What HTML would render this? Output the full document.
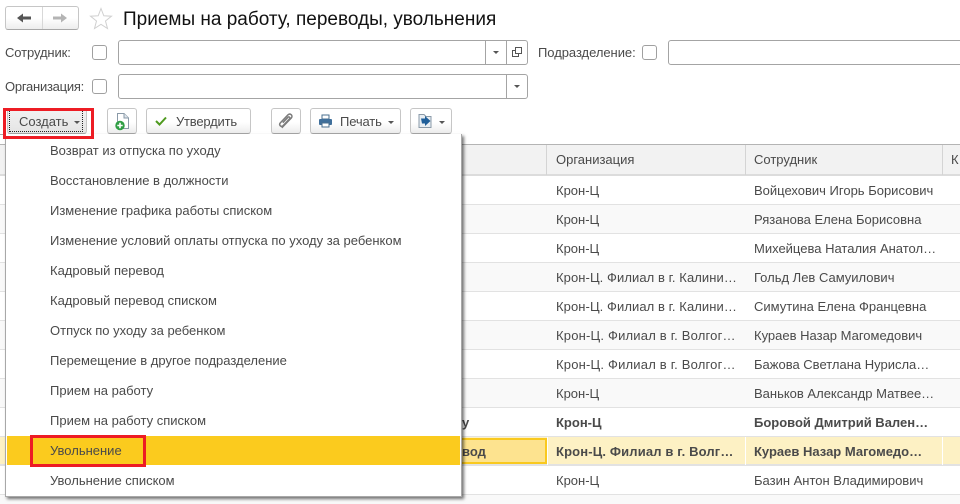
<!DOCTYPE html>
<html lang="ru"><head><meta charset="utf-8"><title>Приемы на работу</title>
<style>
html,body{margin:0;padding:0;width:960px;height:504px;overflow:hidden;background:#fff}
body{font-family:"Liberation Sans",Arial,sans-serif;font-size:13px;color:#4a4a4a;position:relative}
.a{position:absolute;box-sizing:border-box}
.t{position:absolute;white-space:nowrap;line-height:16px;height:16px}
.btn{position:absolute;box-sizing:border-box;top:108px;height:26px;border:1px solid #c6c6c6;border-bottom-color:#a8a8a8;border-radius:3px;background:linear-gradient(#fff 0,#fff 55%,#ececec 100%)}
.cb{position:absolute;box-sizing:border-box;width:15px;height:15px;border:1px solid #a0a0a0;border-radius:3px;background:#fff}
.inp{position:absolute;box-sizing:border-box;height:25px;border:1px solid #a4a4a4;border-radius:3px;background:#fff}
.tri{position:absolute;width:0;height:0;border-left:3px solid transparent;border-right:3px solid transparent;border-top:3px solid #555}
.row{position:absolute;left:0;width:960px;height:29px;box-sizing:border-box;border-bottom:1px solid #e2e2e2}
.alt{background:#f9f9f9}
.c1,.c2,.c3{position:absolute;top:7px;white-space:nowrap;line-height:16px;color:#4a4a4a}
.c1{left:556px}.c2{left:754px}.c3{left:400px}
.b{font-weight:bold}
.m{position:absolute;left:50px;white-space:nowrap;line-height:16px;color:#4a4a4a}
.red{position:absolute;box-sizing:border-box;border:3px solid #ed1c24}
</style></head><body>

<!-- nav -->
<div class="a" style="left:5px;top:6px;width:74px;height:24px;border:1px solid #c6c6c6;border-bottom-color:#a8a8a8;border-radius:3px;background:linear-gradient(#fff 50%,#ededed)"></div>
<div class="a" style="left:42px;top:7px;width:1px;height:22px;background:#d8d8d8"></div>
<svg class="a" style="left:16px;top:12px" width="18" height="12" viewBox="0 0 18 12"><path d="M1 6L7 1.500V4.500H15V7.500H7V10.500Z" fill="#555"/></svg>
<svg class="a" style="left:52px;top:12px" width="18" height="12" viewBox="0 0 18 12"><path d="M15 6L9 1.500V4.500H1V7.500H9V10.500Z" fill="#b4b4b4"/></svg>
<svg class="a" style="left:89px;top:7px" width="24" height="23" viewBox="0 0 24 23"><path d="M12 1.500L14.800 8.800L22.500 9.200L16.500 14L18.500 21.500L12 17.300L5.500 21.500L7.500 14L1.500 9.200L9.200 8.800Z" fill="#fff" stroke="#d0d0d0" stroke-width="1"/></svg>
<div class="t" style="left:123px;top:9px;font-size:19px;line-height:21px;height:21px;color:#111">Приемы на работу, переводы, увольнения</div>

<!-- filters -->
<div class="t" style="left:5px;top:45px;letter-spacing:-.1px">Сотрудник:</div>
<div class="cb" style="left:92px;top:45px"></div>
<div class="inp" style="left:118px;top:40px;width:410px"></div>
<div class="a" style="left:485px;top:41px;width:1px;height:23px;background:#a4a4a4"></div>
<div class="a" style="left:506px;top:41px;width:1px;height:23px;background:#a4a4a4"></div>
<div class="tri" style="left:493px;top:51px"></div>
<svg class="a" style="left:511px;top:46px" width="12" height="12" viewBox="0 0 12 12"><path d="M4.500 1.500H10.500V7.500H4.500ZM4.500 4.500H1.500V10.500H7.500V7.500" fill="none" stroke="#555"/></svg>
<div class="t" style="left:538px;top:45px;letter-spacing:-.05px">Подразделение:</div>
<div class="cb" style="left:642px;top:45px"></div>
<div class="inp" style="left:668px;top:40px;width:300px"></div>

<div class="t" style="left:5px;top:79px;letter-spacing:-.25px">Организация:</div>
<div class="cb" style="left:92px;top:79px"></div>
<div class="inp" style="left:118px;top:74px;width:410px"></div>
<div class="a" style="left:506px;top:75px;width:1px;height:23px;background:#a4a4a4"></div>
<div class="tri" style="left:514px;top:85px"></div>

<!-- toolbar -->
<div class="btn" style="left:7px;width:80px;background:linear-gradient(#f2f2f2,#e4e4e4)"></div>
<div class="a" style="left:9px;top:110px;width:74px;height:22px;border:1px dotted #222"></div>
<div class="t" style="left:19px;top:114px">Создать</div>
<div class="tri" style="left:74px;top:121px"></div>

<div class="btn" style="left:107px;width:30px"></div>
<svg class="a" style="left:114px;top:112px" width="18" height="20" viewBox="0 0 18 20"><path d="M3.500 1.500H10L14.500 6V16.500H3.500Z" fill="#fff" stroke="#8a9aa8"/><path d="M10 1.500V6H14.500" fill="#dfe6ec" stroke="#8a9aa8"/><circle cx="6" cy="13.500" r="4.700" fill="#2f9e44"/><path d="M6 10.800V16.200M3.300 13.500H8.700" stroke="#fff" stroke-width="1.600"/></svg>

<div class="btn" style="left:146px;width:105px"></div>
<svg class="a" style="left:155px;top:116px" width="12" height="10" viewBox="0 0 12 10"><path d="M1 5L4.500 8.500L11 1.500" fill="none" stroke="#4f9a1f" stroke-width="2"/></svg>
<div class="t" style="left:176px;top:114px;letter-spacing:-.2px">Утвердить</div>

<div class="btn" style="left:271px;width:30px"></div>
<svg class="a" style="left:278px;top:112px" width="16" height="18" viewBox="0 0 16 18"><path d="M3.800 15.800L13.300 6C15.200 3.800 12.500 .8 10 2.800L2.200 11C.6 13 3.200 15.500 5 13.800L11.600 6.800C12.500 5.600 11 4.300 9.900 5.300L4.800 10.700" fill="none" stroke="#7c7c7c" stroke-width="1.500"/></svg>

<div class="btn" style="left:310px;width:91px"></div>
<svg class="a" style="left:318px;top:114px" width="15" height="14" viewBox="0 0 15 14"><rect x="4" y="1" width="7" height="4" fill="#fff" stroke="#4a6f8f"/><rect x="1" y="5" width="13" height="6" rx="1" fill="#3f6f9b"/><rect x="4" y="9" width="7" height="4" fill="#fff" stroke="#4a6f8f"/></svg>
<div class="t" style="left:340px;top:114px;letter-spacing:-.15px">Печать</div>
<div class="tri" style="left:388px;top:121px"></div>

<div class="btn" style="left:410px;width:42px"></div>
<svg class="a" style="left:417px;top:113px" width="16" height="16" viewBox="0 0 16 16"><path d="M2 1.500H7L9 3.500H14V14.500H2Z" fill="#e8eef3" stroke="#8a9aa8"/><path d="M4 5.500L8 5.500V3L13.500 8L8 13V10.500L5 10.500Z" fill="#1f5f9a"/></svg>
<div class="tri" style="left:439px;top:121px"></div>

<div class="a" style="left:0;top:134px;width:460px;height:1px;background:#a8a8a8"></div>

<!-- table -->
<div class="a" style="left:0;top:144px;width:960px;height:32px;background:#f2f2f2;border-top:1px solid #b4b4b4;border-bottom:2px solid #dcdcdc"></div>
<div class="a" style="left:546px;top:145px;width:1px;height:30px;background:#d4d4d4"></div>
<div class="a" style="left:745px;top:145px;width:1px;height:30px;background:#d4d4d4"></div>
<div class="a" style="left:942px;top:145px;width:1px;height:30px;background:#d4d4d4"></div>
<div class="t" style="left:556px;top:152px">Организация</div>
<div class="t" style="left:754px;top:152px">Сотрудник</div>
<div class="t" style="left:951px;top:152px">К</div>

<div class="row" style="top:176px"><span class="c1">Крон-Ц</span><span class="c2">Войцехович Игорь Борисович</span></div>
<div class="row alt" style="top:205px"><span class="c1">Крон-Ц</span><span class="c2">Рязанова Елена Борисовна</span></div>
<div class="row" style="top:234px"><span class="c1">Крон-Ц</span><span class="c2">Михейцева Наталия Анатол…</span></div>
<div class="row alt" style="top:263px"><span class="c1" style="letter-spacing:.08px">Крон-Ц. Филиал в г. Калини…</span><span class="c2">Гольд Лев Самуилович</span></div>
<div class="row" style="top:292px"><span class="c1" style="letter-spacing:.08px">Крон-Ц. Филиал в г. Калини…</span><span class="c2">Симутина Елена Францевна</span></div>
<div class="row alt" style="top:321px"><span class="c1" style="letter-spacing:.2px">Крон-Ц. Филиал в г. Волгог…</span><span class="c2">Кураев Назар Магомедович</span></div>
<div class="row" style="top:350px"><span class="c1" style="letter-spacing:.2px">Крон-Ц. Филиал в г. Волгог…</span><span class="c2">Бажова Светлана Нурисла…</span></div>
<div class="row alt" style="top:379px"><span class="c1">Крон-Ц</span><span class="c2">Ваньков Александр Матвее…</span></div>
<div class="row" style="top:408px"><span class="c3 b" style="left:462px">у</span><span class="c1 b">Крон-Ц</span><span class="c2 b">Боровой Дмитрий Вален…</span></div>
<div class="row" style="top:437px;background:#fdf1c4;border-bottom:2px solid #e2e2e2"><span class="c1 b" style="letter-spacing:.15px">Крон-Ц. Филиал в г. Волг…</span><span class="c2 b">Кураев Назар Магомедо…</span></div>
<div class="a" style="left:460px;top:438px;width:87px;height:26px;background:#fde38f;border:2px solid #f9c91f;border-left:0"></div>
<div class="t b" style="left:462px;top:444px">вод</div>
<div class="a" style="left:547px;top:437px;width:1px;height:28px;background:#fff"></div>
<div class="a" style="left:745px;top:437px;width:1px;height:28px;background:#fff"></div>
<div class="a" style="left:942px;top:437px;width:1px;height:28px;background:#fff"></div>
<div class="row" style="top:466px"><span class="c1">Крон-Ц</span><span class="c2">Базин Антон Владимирович</span></div>
<div class="row alt" style="top:495px;border:0"></div>

<!-- menu -->
<div class="a" style="left:5px;top:134px;width:457px;height:363px;background:#fff;border:1px solid #a8a8a8;border-top:0;box-shadow:2px 2px 3px rgba(0,0,0,.55)"></div>
<div class="m" style="top:143px">Возврат из отпуска по уходу</div>
<div class="m" style="top:173px">Восстановление в должности</div>
<div class="m" style="top:203px">Изменение графика работы списком</div>
<div class="m" style="top:233px">Изменение условий оплаты отпуска по уходу за ребенком</div>
<div class="m" style="top:263px">Кадровый перевод</div>
<div class="m" style="top:293px">Кадровый перевод списком</div>
<div class="m" style="top:323px">Отпуск по уходу за ребенком</div>
<div class="m" style="top:353px">Перемещение в другое подразделение</div>
<div class="m" style="top:383px">Прием на работу</div>
<div class="m" style="top:413px">Прием на работу списком</div>
<div class="a" style="left:7px;top:436px;width:453px;height:29px;background:#fbcb1e"></div>
<div class="m" style="top:443px">Увольнение</div>
<div class="m" style="top:473px">Увольнение списком</div>

<!-- red highlights -->
<div class="red" style="left:3px;top:108px;width:91px;height:31px"></div>
<div class="red" style="left:30px;top:435px;width:116px;height:32px"></div>
</body></html>
